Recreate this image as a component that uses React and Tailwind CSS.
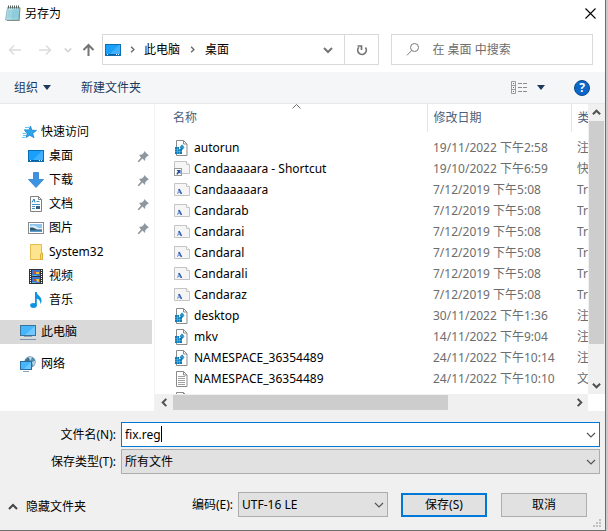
import React, { useState } from 'react'

function NotepadIcon() {
  return (
    <svg width="16" height="17" viewBox="0 0 16 17">
      <path d="M3 2.500h12.500l-1 13.500H2z" fill="#8a7a52" />
      <path d="M2.500 2.500h12L13.500 15H.5z" fill="#b4e0ea" stroke="#7fb3c0" strokeWidth=".8" />
      <path d="M3 6h10.500M2.700 8h10.500M2.400 10h10.500M2.100 12h10.500" stroke="#86c5d3" strokeWidth=".9" />
      <path d="M8 3h6.500L13.500 15H6z" fill="#6cbdd0" opacity=".35" />
      <path d="M3.500 .5v3M5.500 .5v3M7.500 .5v3M9.500 .5v3M11.500 .5v3M13.500 .5v3" stroke="#55615f" />
    </svg>
  )
}

function DesktopIcon() {
  return (
    <svg width="16" height="12" viewBox="0 0 16 12">
      <rect x=".5" y=".5" width="15" height="11" fill="#18a0fb" stroke="#0b6fb3" />
      <path d="M14 1L5 10h10V1z" fill="#41b1ff" />
      <path d="M1 10.500h14" stroke="#0c5f9c" />
      <path d="M2 10.500h1M11 10.500h1M13 10.500h1" stroke="#fff" />
    </svg>
  )
}

function StarIcon() {
  return (
    <svg width="16" height="16" viewBox="0 0 16 16">
      <path d="M8.500 2l1.300 4.200 4.700.2-3.800 3 1.300 4.300-4.200-2.500L4 13.500l1.300-4.100L2.500 6.500l4.200-.3z" fill="#2ba3e8" stroke="#1787cc" strokeWidth=".8" />
      <path d="M3 3.500h4M2 5.500h4M.5 9.500h4M1 11.500h3M0 13.500h3" stroke="#58bdf2" strokeWidth=".9" />
    </svg>
  )
}

function DownloadIcon() {
  return (
    <svg width="16" height="16" viewBox="0 0 16 16">
      <path d="M5.500 .5h5v7h5L8 15.500.5 7.500h5z" fill="#3b93e3" stroke="#2f7fcb" strokeWidth=".8" />
    </svg>
  )
}

function DocumentIcon() {
  return (
    <svg width="12" height="16" viewBox="0 0 12 16">
      <path d="M.5 .5h8l3 3v12H.5z" fill="#fff" stroke="#808080" />
      <path d="M8.500 .5v3h3" fill="none" stroke="#808080" />
      <path d="M2 6.500L4 3l1 3.500" fill="none" stroke="#1a7cc2" />
      <path d="M6.500 5.500h3M2 8.500h8M2 10.500h3M2 12.500h3" stroke="#4795c8" />
      <rect x="6" y="10" width="4" height="3" fill="#365e86" />
    </svg>
  )
}

function PictureIcon() {
  return (
    <svg width="16" height="12" viewBox="0 0 16 12">
      <rect x=".5" y=".5" width="15" height="11" fill="#fff" stroke="#858b91" />
      <rect x="2" y="2" width="12" height="8" fill="#8fc4ec" />
      <path d="M2 4.500c3-2 5-1 7 .5s4 1 5 1V8H2z" fill="#dceefb" />
      <path d="M2 5.500l3 0 4 2h5V10H2z" fill="#32566b" />
      <path d="M2 8.500h12V10H2z" fill="#5d9ccf" />
    </svg>
  )
}

function FolderIcon() {
  return (
    <svg width="13" height="16" viewBox="0 0 13 16">
      <path d="M.5 .5h11v9h1v6H.5z" fill="#ffe48f" stroke="#e3bd4e" />
      <path d="M10.500 15.500V10l2-1v6.500z" fill="#ffd766" stroke="#dcae3a" />
    </svg>
  )
}

function VideoIcon() {
  return (
    <svg width="14" height="15" viewBox="0 0 14 15">
      <rect width="14" height="15" fill="#303236" />
      <path d="M1.500 1v14M12.500 1v14" stroke="#fff" strokeDasharray="1 1" />
      <rect x="3" y="1" width="8" height="6" fill="#3d76cf" />
      <rect x="3" y="8" width="8" height="6" fill="#3d76cf" />
      <path d="M4 2h3v3H4zM4 10h2v2H4z" fill="#cc4f3b" />
      <path d="M7 3h3v2H7zM7 10h3v3H8z" fill="#e8c240" />
      <path d="M3 6h5v1H3zM3 13h4v1H3z" fill="#4fb0d9" />
    </svg>
  )
}

function MusicIcon() {
  return (
    <svg width="12" height="16" viewBox="0 0 12 16">
      <ellipse cx="3.500" cy="13.500" rx="3.300" ry="2.400" fill="#0c93e4" />
      <path d="M5 0h1.800c0 3.500 4.700 4 4.700 8.500 0 1.300-.4 2.500-1.300 3.500.4-3-1-4.600-3.400-5.500v7H5z" fill="#0c93e4" />
    </svg>
  )
}

function ComputerIcon() {
  return (
    <svg width="16" height="16" viewBox="0 0 16 16">
      <rect x=".5" y="1.500" width="15" height="10" fill="#45b6fb" stroke="#3a7298" />
      <path d="M15 2L5 11h10z" fill="#6fc9ff" />
      <path d="M4 12.500h8" stroke="#8fa3b6" />
      <path d="M0 15.500h16" stroke="#7b93ad" />
    </svg>
  )
}

function NetworkIcon() {
  return (
    <svg width="16" height="16" viewBox="0 0 16 16">
      <circle cx="10" cy="6" r="5.700" fill="#5b8eae" />
      <path d="M6 3c2-2 4-2.500 6-2l-1 3-3 1zM12 6l3-1c.5 2-.5 4-2 5z" fill="#b5d6e8" />
      <path d="M8 1l2 3-2 2-3-1z" fill="#3d7290" />
      <rect x=".5" y="5.500" width="11" height="8" fill="#45b6fb" stroke="#2a6c9b" />
      <path d="M11 6L4 13h7z" fill="#6fc9ff" />
      <path d="M3 15.500h6" stroke="#8ba3b8" />
    </svg>
  )
}

function PinIcon() {
  return (
    <svg width="11" height="11" viewBox="0 0 11 11" fill="#8d979f">
      <path d="M6 0l5 4.500-1.500.5-2.200 2.200L7 10 4.500 7.500 1 11H0v-1l3-3.500L1 4l3-.4L6 1.500z" />
    </svg>
  )
}

function RegIcon() {
  return (
    <svg width="14" height="16" viewBox="0 0 14 16">
      <path d="M2.500 .5h7l3.500 3.500v11.500H2.500z" fill="#fff" stroke="#8b8b8b" />
      <path d="M9.500 .5v3.500h3.500" fill="none" stroke="#8b8b8b" />
      <path d="M1 7h4v2h3v5H1z" fill="#0c7bb8" />
      <path d="M1 9.500h4M1 11.500h7M3.500 7v7M5.500 9v5" stroke="#6cc3ea" strokeWidth=".5" />
      <path d="M8 4.500l2.500 3L8 10 5.500 7.500z" fill="#0c7bb8" />
      <path d="M7 7.500l1-1.200M8.500 8L9.500 7" stroke="#8fd4f3" strokeWidth=".8" />
    </svg>
  )
}

function FontIcon() {
  return (
    <svg width="16" height="13" viewBox="0 0 16 13">
      <path d="M.5 .5h12l3 3v9H.5z" fill="#f5f5f5" stroke="#c4c4c4" />
      <path d="M12.500 .5v3h3" fill="#fff" stroke="#c4c4c4" />
      <path d="M3.500 11L5 6l2.500 5" fill="none" stroke="#7f9fd8" />
      <path d="M5 6l2.500 5" stroke="#2f5fb8" strokeWidth="1.500" />
      <path d="M4 9.500h2" stroke="#7f9fd8" />
    </svg>
  )
}

function ShortcutIcon() {
  return (
    <svg width="16" height="15" viewBox="0 0 16 15">
      <path d="M.5 .5h12l3 3v9H.5z" fill="#f5f5f5" stroke="#c4c4c4" />
      <path d="M12.500 .5v3h3" fill="#fff" stroke="#c4c4c4" />
      <rect x=".5" y="7.500" width="7" height="7" fill="#fff" stroke="#9a9a9a" />
      <path d="M2.500 9h4v4L5.200 11.700 3 14l-.5-1.500 1.500-2z" fill="#1f4f9e" />
    </svg>
  )
}

function TextIcon() {
  return (
    <svg width="14" height="16" viewBox="0 0 14 16">
      <path d="M2.500 .5h7l3.500 3.500v11.500H2.500z" fill="#fff" stroke="#8b8b8b" />
      <path d="M9.500 .5v3.500h3.500" fill="none" stroke="#8b8b8b" />
      <path d="M4 5.500h7M4 7.500h7M4 9.500h7M4 11.500h7M4 13.500h7" stroke="#a0a0a0" />
    </svg>
  )
}

function Chevron({ dir = 'down', size = 10, color = '#555', width = 1.5 }) {
  const paths = {
    down: 'M1 3l4 4 4-4',
    up: 'M1 7l4-4 4 4',
    left: 'M7 1L3 5l4 4',
    right: 'M3 1l4 4-4 4',
  }
  return (
    <svg width={size} height={size} viewBox="0 0 10 10" fill="none" stroke={color} strokeWidth={width}>
      <path d={paths[dir]} />
    </svg>
  )
}

function Triangle() {
  return (
    <svg width="8" height="5" viewBox="0 0 8 5">
      <path d="M0 0h8L4 5z" fill="#1e395b" />
    </svg>
  )
}

const quickAccess = [
  { label: '桌面', Icon: DesktopIcon, pinned: true },
  { label: '下载', Icon: DownloadIcon, pinned: true },
  { label: '文档', Icon: DocumentIcon, pinned: true },
  { label: '图片', Icon: PictureIcon, pinned: true },
  { label: 'System32', Icon: FolderIcon },
  { label: '视频', Icon: VideoIcon },
  { label: '音乐', Icon: MusicIcon },
]

const files = [
  { name: 'autorun', date: '19/11/2022 下午2:58', type: '注', Icon: RegIcon },
  { name: 'Candaaaaara - Shortcut', date: '19/10/2022 下午6:59', type: '快', Icon: ShortcutIcon },
  { name: 'Candaaaaara', date: '7/12/2019 下午5:08', type: 'Tr', Icon: FontIcon },
  { name: 'Candarab', date: '7/12/2019 下午5:08', type: 'Tr', Icon: FontIcon },
  { name: 'Candarai', date: '7/12/2019 下午5:08', type: 'Tr', Icon: FontIcon },
  { name: 'Candaral', date: '7/12/2019 下午5:08', type: 'Tr', Icon: FontIcon },
  { name: 'Candarali', date: '7/12/2019 下午5:08', type: 'Tr', Icon: FontIcon },
  { name: 'Candaraz', date: '7/12/2019 下午5:08', type: 'Tr', Icon: FontIcon },
  { name: 'desktop', date: '30/11/2022 下午1:36', type: '注', Icon: RegIcon },
  { name: 'mkv', date: '14/11/2022 下午9:04', type: '注', Icon: RegIcon },
  { name: 'NAMESPACE_36354489', date: '24/11/2022 下午10:14', type: '注', Icon: RegIcon },
  { name: 'NAMESPACE_36354489', date: '24/11/2022 下午10:10', type: '文', Icon: TextIcon },
  { name: '', date: '', type: '', Icon: TextIcon },
]

function TitleBar() {
  return (
    <header className="flex h-7 shrink-0 items-center gap-1 pb-px pl-[5px] pr-[5px]">
      <NotepadIcon />
      <h1 className="flex-1">另存为</h1>
      <button type="button" aria-label="关闭" className="p-1">
        <svg width="11" height="11" viewBox="0 0 11 11" stroke="#000" strokeWidth="1.100">
          <path d="M.5 .5l10 10M10.500 .5l-10 10" />
        </svg>
      </button>
    </header>
  )
}

function NavBar() {
  return (
    <nav className="flex h-11 shrink-0 items-center pr-3 pt-[6px] pb-[7px]">
      <div className="flex w-[102px] shrink-0 items-center pl-2">
        <button type="button" aria-label="后退" className="w-[30px]">
          <svg width="14" height="12" viewBox="0 0 14 12" fill="none" stroke="#dcdcdc" strokeWidth="1.500">
            <path d="M13 6H2M6 1.500L1.500 6 6 10.500" />
          </svg>
        </button>
        <button type="button" aria-label="前进" className="w-[26px]">
          <svg width="14" height="12" viewBox="0 0 14 12" fill="none" stroke="#dcdcdc" strokeWidth="1.500">
            <path d="M1 6h11M8 1.500L12.500 6 8 10.500" />
          </svg>
        </button>
        <button type="button" aria-label="最近位置" className="w-[18px]">
          <Chevron size={8} color="#d4d4d4" width={2} />
        </button>
        <button type="button" aria-label="向上">
          <svg width="13" height="13" viewBox="0 0 13 13" fill="none" stroke="#757575" strokeWidth="2">
            <path d="M6.500 13V2M1.500 7l5-5 5 5" />
          </svg>
        </button>
      </div>

      <div className="flex h-[31px] flex-1 items-center border border-[#d9d9d9] pl-0.5">
        <DesktopIcon />
        <span className="flex w-[23px] justify-center">
          <Chevron dir="right" size={7} color="#6b6b6b" width={2} />
        </span>
        <button type="button">此电脑</button>
        <span className="flex w-[25px] justify-center">
          <Chevron dir="right" size={7} color="#6b6b6b" width={2} />
        </span>
        <button type="button">桌面</button>
        <div className="flex-1" />
        <button type="button" aria-label="历史位置" className="px-[11px]">
          <Chevron color="#757575" width={2} />
        </button>
        <button type="button" aria-label="刷新" className="flex h-full w-[34px] items-center justify-center border-l border-[#d9d9d9]">
          <svg width="12" height="12" viewBox="0 0 12 12" fill="none" stroke="#757575" strokeWidth="1.700">
            <path d="M2.800 3.200A4.300 4.300 0 1 0 9.500 3.500" />
            <path d="M1.500 2h4v4" />
          </svg>
        </button>
      </div>

      <label className="ml-3 flex h-[31px] w-[34%] items-center gap-3 border border-[#d9d9d9] pl-[14px]">
        <svg width="14" height="13" viewBox="0 0 14 13" fill="none" stroke="#777">
          <circle cx="8.500" cy="4.500" r="4" />
          <path d="M5.700 7.500L1 12.300" />
        </svg>
        <input type="search" aria-label="搜索" placeholder="在 桌面 中搜索" className="min-w-0 flex-1 outline-none placeholder:text-[#6d6d6d]" />
      </label>
    </nav>
  )
}

function Toolbar() {
  return (
    <div className="flex h-8 shrink-0 items-center border-b border-[#e6e8ea] bg-[#f5f6f7] px-[14px] text-[#1e395b]">
      <button type="button" className="flex items-center gap-[5px]">
        组织 <Triangle />
      </button>
      <button type="button" className="ml-[30px]">新建文件夹</button>
      <div className="flex-1" />
      <button type="button" aria-label="更改视图" className="flex items-center gap-[9px]">
        <svg width="17" height="13" viewBox="0 0 17 13" fill="none">
          <path d="M.5 .5h4v12h-4zM.5 4.500h4M.5 8.500h4" stroke="#9a9a9a" />
          <path d="M2 2.500h1" stroke="#4a7d48" />
          <path d="M2 6.500h1" stroke="#2a72c8" />
          <path d="M2 10.500h1" stroke="#d0462c" />
          <path d="M7 2.500h4M12 2.500h4M7 6.500h4M12 6.500h4M7 10.500h4M12 10.500h4" stroke="#8c8c8c" />
        </svg>
        <Triangle />
      </button>
      <button type="button" aria-label="帮助" className="ml-[29px] mr-px flex size-4 items-center justify-center rounded-full border border-[#0a4a8c] bg-[#0a66c8] font-bold text-white">
        ?
      </button>
    </div>
  )
}

function Sidebar() {
  return (
    <aside className="w-[155px] shrink-0 border-r border-[#f3f3f3] pr-0.5 pt-4">
      <a href="#quick" className="flex h-6 items-center gap-[3px] pl-[22px]">
        <StarIcon /> 快速访问
      </a>
      {quickAccess.map(({ label, Icon, pinned }) => (
        <a key={label} href="#folder" className="flex h-6 items-center gap-[5px] pl-7 pr-[3px]">
          <span className="flex w-4 justify-center"><Icon /></span>
          <span className="flex-1">{label}</span>
          {pinned && <PinIcon />}
        </a>
      ))}
      <a href="#computer" className="mt-2 flex h-6 items-center gap-[5px] bg-[#d9d9d9] pl-5">
        <ComputerIcon /> 此电脑
      </a>
      <a href="#network" className="mt-2 flex h-6 items-center gap-[5px] pl-5">
        <NetworkIcon /> 网络
      </a>
    </aside>
  )
}

function FileTable() {
  return (
    <div className="min-w-0 flex-1 overflow-hidden pl-3">
      <table className="w-full table-fixed border-collapse whitespace-nowrap text-left">
        <colgroup>
          <col />
          <col className="w-[144px]" />
          <col className="w-[17px]" />
        </colgroup>
        <thead className="text-[#4c607a]">
          <tr className="h-7">
            <th className="relative border-r border-[#e5e5e5] pl-[6px] font-normal">
              名称
              <span className="absolute inset-x-0 top-0 flex justify-center">
                <svg width="9" height="5" viewBox="0 0 9 5" fill="none" stroke="#6a6a6a">
                  <path d="M.5 4.500l4-4 4 4" />
                </svg>
              </span>
            </th>
            <th className="border-r border-[#e5e5e5] pl-[6px] font-normal">修改日期</th>
            <th className="overflow-hidden pl-[6px] font-normal">类</th>
          </tr>
        </thead>
        <tbody>
          <tr className="h-[5px]"><td colSpan={3} className="p-0" /></tr>
          {files.map(({ name, date, type, Icon }, i) => (
            <tr key={i} className="h-[21px]">
              <td className="p-0 pl-[7px]">
                <div className="flex items-center gap-1">
                  <span className="flex h-4 w-4 items-center"><Icon /></span>
                  {name}
                </div>
              </td>
              <td className="p-0 pl-[6px] text-[#6d6d6d]">{date}</td>
              <td className="overflow-hidden p-0 pl-[6px] text-[#6d6d6d]">{type}</td>
            </tr>
          ))}
        </tbody>
      </table>
    </div>
  )
}

function ScrollButton({ dir, label }) {
  return (
    <button type="button" aria-label={label} className="flex size-[17px] shrink-0 items-center justify-center">
      <Chevron dir={dir} size={9} color="#505050" width={2.2} />
    </button>
  )
}

function FileList() {
  return (
    <div className="flex min-w-0 flex-1 flex-col">
      <div className="flex min-h-0 flex-1">
        <FileTable />
        <div className="flex w-[17px] shrink-0 flex-col items-center bg-[#f0f0f0]">
          <ScrollButton dir="up" label="向上滚动" />
          <div className="w-full flex-1 px-px"><div className="h-[87%] bg-[#cdcdcd]" /></div>
          <ScrollButton dir="down" label="向下滚动" />
        </div>
      </div>
      <div className="flex h-[17px] shrink-0">
        <div className="flex min-w-0 flex-1 items-center bg-[#f0f0f0] pl-px">
          <ScrollButton dir="left" label="向左滚动" />
          <div className="h-[15px] flex-1"><div className="h-full w-[69%] bg-[#cdcdcd]" /></div>
          <ScrollButton dir="right" label="向右滚动" />
        </div>
        <div className="w-[17px]" />
      </div>
    </div>
  )
}

function Footer() {
  const [fileName, setFileName] = useState('fix.reg')

  return (
    <form className="shrink-0 bg-[#f0f0f0] pb-[13px] pr-[5px] pt-[11px]" onSubmit={(e) => e.preventDefault()}>
      <div className="flex items-center">
        <label htmlFor="file-name" className="w-[121px] pr-[5px] text-right">文件名(N):</label>
        <div className="relative flex-1">
          <input
            id="file-name"
            value={fileName}
            onChange={(e) => setFileName(e.target.value)}
            className="block h-[25px] w-full border border-[#0078d7] bg-white px-[3px] outline-none"
          />
          <span className="absolute left-10 top-1 h-4 w-px bg-black" />
          <span className="pointer-events-none absolute right-1 top-2"><Chevron width={1.2} /></span>
        </div>
      </div>
      <div className="mt-0.5 flex items-center">
        <label htmlFor="file-type" className="w-[121px] pr-[5px] text-right">保存类型(T):</label>
        <div className="relative flex-1">
          <select id="file-type" className="block h-[25px] w-full appearance-none border border-[#adadad] bg-[#e1e1e1] px-[3px]">
            <option>所有文件</option>
          </select>
          <span className="pointer-events-none absolute right-1 top-2"><Chevron width={1.2} /></span>
        </div>
      </div>
      <div className="mt-[18px] flex items-center pr-[13px]">
        <button type="button" className="mt-1 flex items-center gap-2 pl-2">
          <Chevron dir="up" color="#444" width={2} />
          隐藏文件夹
        </button>
        <div className="flex-1" />
        <label htmlFor="encoding" className="pr-[5px]">编码(E):</label>
        <div className="relative w-[150px]">
          <select id="encoding" className="block h-[25px] w-full appearance-none border border-[#adadad] bg-[#e1e1e1] px-[3px]">
            <option>UTF-16 LE</option>
          </select>
          <span className="pointer-events-none absolute right-1 top-2"><Chevron width={1.2} /></span>
        </div>
        <button type="submit" className="ml-[13px] h-6 w-[86px] border-2 border-[#0078d7] bg-[#e1e1e1]">保存(S)</button>
        <button type="button" className="ml-[14px] h-6 w-[86px] border border-[#adadad] bg-[#e1e1e1]">取消</button>
      </div>
    </form>
  )
}

function ResizeGrip() {
  return (
    <svg className="absolute bottom-[3px] right-1" width="8" height="8" viewBox="0 0 8 8" fill="#bfbfbf">
      <path d="M6 0h2v2H6zM3 3h2v2H3zM6 3h2v2H6zM0 6h2v2H0zM3 6h2v2H3zM6 6h2v2H6z" />
    </svg>
  )
}

export default function App() {
  return (
    <div className="h-screen bg-[#c9c9c9] pr-0.5 font-['Noto_Sans','Noto_Sans_CJK_SC',sans-serif] text-[12px] leading-4 text-black">
      <div className="relative flex h-full flex-col overflow-hidden border-b border-r border-[#6e6e6e] bg-white">
        <TitleBar />
        <NavBar />
        <Toolbar />
        <main className="flex min-h-0 flex-1">
          <Sidebar />
          <FileList />
        </main>
        <Footer />
        <ResizeGrip />
      </div>
    </div>
  )
}
